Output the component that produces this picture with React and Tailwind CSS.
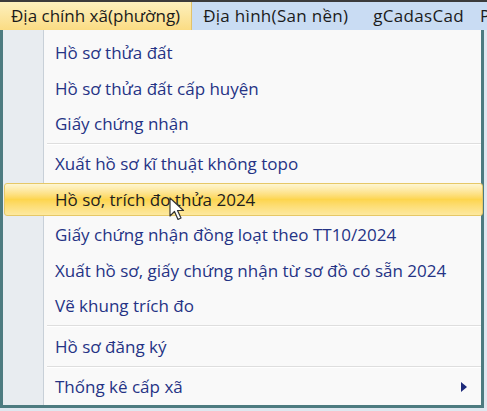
import React from 'react';

const ITEMS = [
  { label: 'Hồ sơ thửa đất' },
  { label: 'Hồ sơ thửa đất cấp huyện' },
  { label: 'Giấy chứng nhận', sep: true },
  { label: 'Xuất hồ sơ kĩ thuật không topo' },
  { label: 'Hồ sơ, trích đo thửa 2024', active: true },
  { label: 'Giấy chứng nhận đồng loạt theo TT10/2024' },
  { label: 'Xuất hồ sơ, giấy chứng nhận từ sơ đồ có sẵn 2024' },
  { label: 'Vẽ khung trích đo', sep: true },
  { label: 'Hồ sơ đăng ký', sep: true },
  { label: 'Thống kê cấp xã', sub: true },
];

function Cursor() {
  return (
    <svg className="absolute left-[169px] top-[197px]" width="20" height="26" viewBox="0 0 20 26">
      <path d="M1 1 L1 19 L5.5 14.5 L9 22.5 L12 21 L8.5 13.5 L14.5 13.5 Z" fill="#fff" stroke="#333" strokeWidth="1.2" strokeLinejoin="round" />
    </svg>
  );
}

export default function App() {
  return (
    <div className="relative w-[487px] h-[411px] overflow-hidden bg-[#dfe7ef] font-['Open_Sans',sans-serif]">
      {/* menu bar */}
      <div className="flex h-[30px] items-stretch bg-[#c9dcf3] border-t-2 border-[#3b3b3b] text-[17px] text-[#1b1b1b] whitespace-nowrap">
        <div className="flex items-center pl-[11px] pr-[11px] bg-gradient-to-b from-[#fdf0bd] to-[#fbdc83] border-r border-[#e2c26a]">
          Địa chính xã(phường)
        </div>
        <div className="flex items-center pl-[11px] pr-[22px] tracking-[0.3px]">Địa hình(San nền)</div>
        <div className="flex items-center pl-[3px] pr-[16px] tracking-[0.3px]">gCadasCad</div>
        <div className="flex items-center">P</div>
      </div>

      {/* dropdown */}
      <div className="relative w-[484px] h-[378px] border-[3px] border-t-0 border-[#4d7b80] bg-[#f9f9f9] flex">
        <div className="w-[41px] shrink-0 bg-[#e8ecf0] border-r border-[#c8d0d8]" />
        <div className="flex-1 flex flex-col pt-[5px]">
          {ITEMS.map((it, i) => (
            <React.Fragment key={i}>
              <div className={`relative flex items-center h-[36px] pl-[11px] pr-[14px] text-[17px] whitespace-nowrap ${it.active ? 'text-[#1e1e1e]' : 'text-[#253385]'}`}>
                {it.active && (
                  <div className="absolute left-[-40px] right-[-2px] top-[1px] bottom-[1px] rounded-[3px] border border-[#e6c867] bg-gradient-to-b from-[#fef6d2] via-[#fdd54d] to-[#fde9a0]" />
                )}
                <span className="relative flex-1">{it.label}</span>
                {it.sub && (
                  <svg width="6" height="10" viewBox="0 0 6 10" className="relative">
                    <path d="M0 0 L6 5 L0 10 Z" fill="#1d2a7a" />
                  </svg>
                )}
              </div>
              {it.sep && <div className="ml-[3px] h-[2px] bg-[#dedede] border-b border-white my-[1.5px]" />}
            </React.Fragment>
          ))}
        </div>
      </div>
      <Cursor />
    </div>
  );
}
